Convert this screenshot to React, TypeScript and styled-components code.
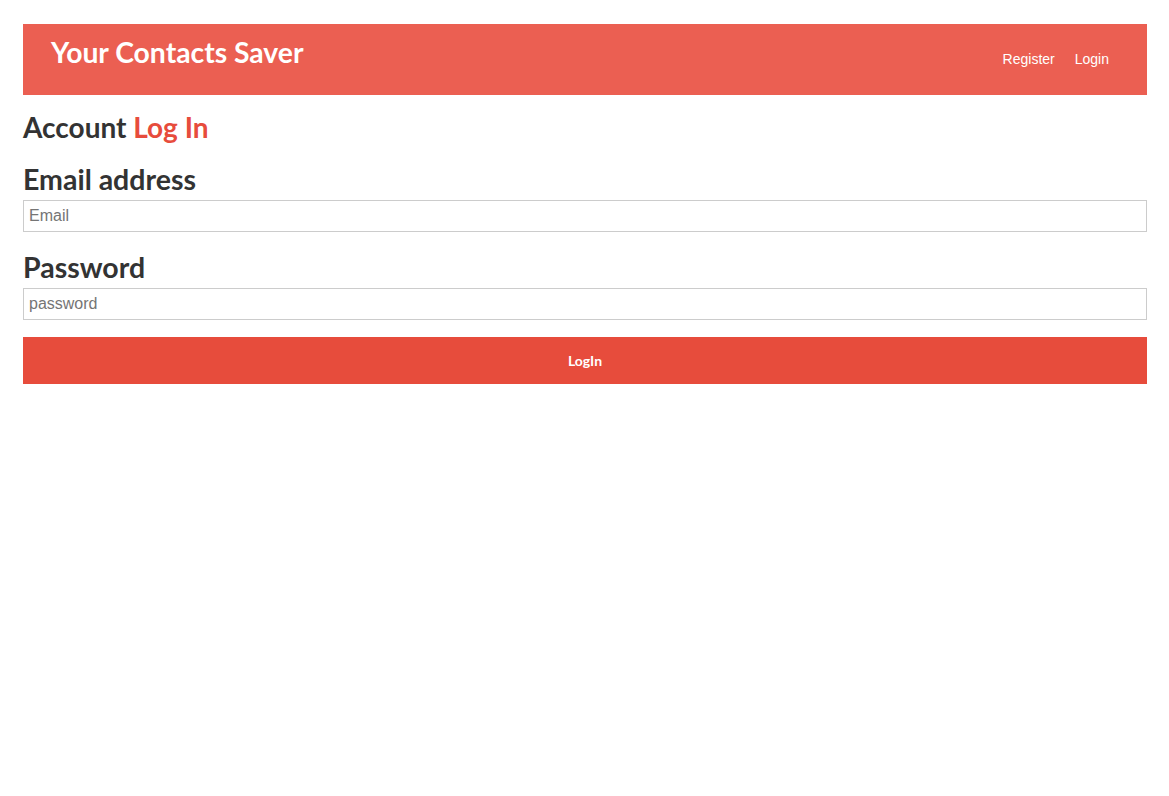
import styled, { createGlobalStyle } from "styled-components";

const GlobalStyle = createGlobalStyle`
  body {
    margin: 0;
    background: #fff;
    font-family: "Lato", "Liberation Sans", sans-serif;
    color: #333;
  }
  * { box-sizing: border-box; }
`;

const Page = styled.div`
  padding: 24px 22px 24px 23px;
`;

const Navbar = styled.nav`
  display: flex;
  justify-content: space-between;
  align-items: flex-start;
  height: 71px;
  padding: 11px 38px 0 28px;
  background-color: #eb5f52;
  color: #fff;
`;

const Brand = styled.h1`
  margin: 0;
  font-family: "Lato", sans-serif;
  font-size: 28.3px;
  font-weight: 700;
  line-height: 34px;
`;

const NavLinks = styled.ul`
  display: flex;
  gap: 20px;
  list-style: none;
  margin: 0;
  padding: 13px 0 0;
`;

const NavLink = styled.a`
  color: #fff;
  text-decoration: none;
  font-family: "Liberation Sans", Arial, sans-serif;
  font-size: 14px;
  line-height: 18px;
`;

const Heading = styled.h2`
  margin: 14px 0 0;
  font-family: "Lato", sans-serif;
  font-size: 28px;
  font-weight: 700;
  line-height: 36px;
`;

const Accent = styled.span`
  color: #e74c3c;
`;

const Form = styled.form`
  display: flex;
  flex-direction: column;
`;

const Field = styled.div<{ $first?: boolean }>`
  display: flex;
  flex-direction: column;
  margin-top: ${(p) => (p.$first ? "17px" : "18px")};
`;

const Label = styled.label`
  margin-bottom: 4px;
  font-family: "Lato", sans-serif;
  font-size: 28.5px;
  font-weight: 700;
  line-height: 34px;
`;

const Input = styled.input`
  height: 32px;
  width: 100%;
  padding: 0 5px;
  border: 1px solid #ccc;
  font-family: "Liberation Sans", Arial, sans-serif;
  font-size: 16px;
  color: #333;
  outline: none;
  &::placeholder {
    color: #757575;
  }
`;

const Submit = styled.button`
  margin-top: 17px;
  height: 47px;
  width: 100%;
  border: none;
  background-color: #e74c3c;
  color: #fff;
  font-family: "Lato", sans-serif;
  font-weight: 700;
  font-size: 14px;
  cursor: pointer;
`;

export default function App() {
  return (
    <>
      <GlobalStyle />
      <Page>
        <Navbar>
          <Brand>Your Contacts Saver</Brand>
          <NavLinks>
            <li>
              <NavLink href="#">Register</NavLink>
            </li>
            <li>
              <NavLink href="#">Login</NavLink>
            </li>
          </NavLinks>
        </Navbar>
        <Heading>
          Account <Accent>Log In</Accent>
        </Heading>
        <Form onSubmit={(e) => e.preventDefault()}>
          <Field $first>
            <Label htmlFor="email">Email address</Label>
            <Input id="email" type="email" placeholder="Email" />
          </Field>
          <Field>
            <Label htmlFor="password">Password</Label>
            <Input id="password" type="password" placeholder="password" />
          </Field>
          <Submit type="submit">LogIn</Submit>
        </Form>
      </Page>
    </>
  );
}
